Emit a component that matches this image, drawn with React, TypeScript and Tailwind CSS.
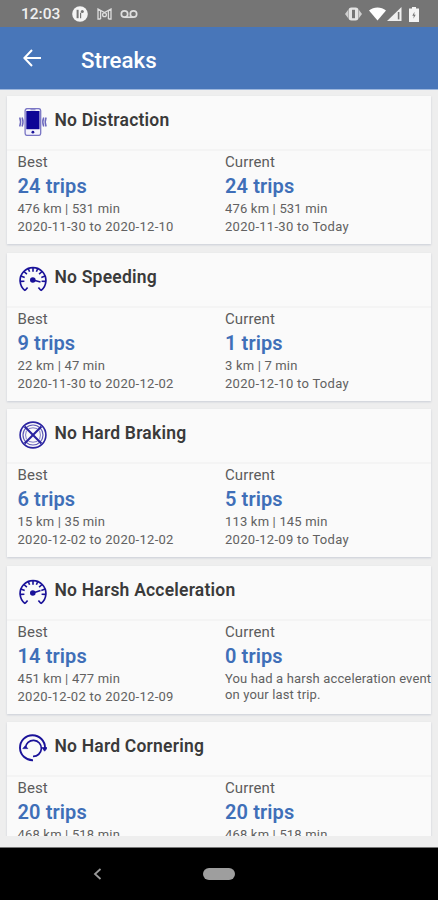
import React from 'react';

interface StreakStat {
  label: string;
  trips: number;
  distance?: string;
  dates?: string;
  note?: string;
}

interface Streak {
  title: string;
  icon: React.ReactNode;
  best: StreakStat;
  current: StreakStat;
}

const NAVY = '#1a1299';

const PhoneIcon = () => (
  <svg className="size-7 shrink-0" viewBox="0 0 28 28" fill="none">
    <rect x="6.1" y="0.6" width="15.6" height="26.8" rx="2.2" fill="#f3f2fb" stroke="#7975c4" strokeWidth="1.3" />
    <rect x="7.3" y="3" width="13.2" height="18.2" fill="#0d0596" />
    <path d="M11.5 1.8h5" stroke="#6c68bd" strokeWidth="0.8" />
    <circle cx="13.9" cy="24.2" r="1.4" fill={NAVY} />
    <path d="M3.1 9.5c1.2 3 1.2 6 0 9M24.7 9.5c-1.2 3-1.2 6 0 9" stroke="#6b67bd" strokeWidth="1.5" />
    <path d="M0.7 9.5c1.2 3 1.2 6 0 9M27.1 9.5c-1.2 3-1.2 6 0 9" stroke="#6b67bd" strokeWidth="1.5" />
  </svg>
);

const GaugeIcon = ({ needle }: { needle: string }) => (
  <svg className="size-7 shrink-0" viewBox="0 0 28 28" fill="none" stroke={NAVY}>
    <path d="M6 25.6A12.9 12.9 0 1 1 22 25.6" strokeWidth="1.7" />
    <path
      d="M14 2v4.8M9 3l1.6 3.7M19 3l-1.6 3.7M4.9 6.5l3 2.7M23.1 6.5l-3 2.7M1.9 11l3.8 1.4M26.1 11l-3.8 1.4M1 16.4l4.4-.2M27 16.4l-4.4-.2M6 25.6l2.6-3.2M22 25.6l-2.6-3.2"
      strokeWidth="1.6"
    />
    <circle cx="13.8" cy="15" r="2.8" fill={NAVY} stroke="none" />
    <path d={needle} strokeWidth="1.6" />
  </svg>
);

const BrakeIcon = () => (
  <svg className="size-7 shrink-0" viewBox="0 0 28 28" fill="none" stroke="#2a23a0">
    <circle cx="14" cy="14" r="12.9" strokeWidth="1.6" />
    <circle cx="14" cy="14" r="10" strokeWidth="1.2" strokeOpacity=".75" />
    <path d="M5.6 5.6l16.8 16.8M22.4 5.6L5.6 22.4" strokeWidth="2.1" />
    <path d="M9.6 7.6q4.4-1.6 8.8 0M9.6 20.4q4.4 1.6 8.8 0M7.4 9.6q-1.6 4.4 0 8.8M20.6 9.6q1.6 4.4 0 8.8" strokeWidth="1" strokeOpacity=".6" />
  </svg>
);

const CornerIcon = () => (
  <svg className="size-7 shrink-0" viewBox="0 0 28 28" fill="none" stroke={NAVY}>
    <path d="M14 26.2A12.5 12.5 0 1 1 26 14" strokeWidth="1.9" />
    <path d="M6.4 13.8A8 8 0 1 1 14 22.3" strokeWidth="1.7" />
    <path d="M23 13.6h5.6L25.6 17.2zM3.8 14.6h5L6.3 11.8z" fill={NAVY} strokeWidth=".7" />
  </svg>
);

const STREAKS: Streak[] = [
  {
    title: 'No Distraction',
    icon: <PhoneIcon />,
    best: { label: 'Best', trips: 24, distance: '476 km | 531 min', dates: '2020-11-30 to 2020-12-10' },
    current: { label: 'Current', trips: 24, distance: '476 km | 531 min', dates: '2020-11-30 to Today' },
  },
  {
    title: 'No Speeding',
    icon: <GaugeIcon needle="M14 15l7.5 2" />,
    best: { label: 'Best', trips: 9, distance: '22 km | 47 min', dates: '2020-11-30 to 2020-12-02' },
    current: { label: 'Current', trips: 1, distance: '3 km | 7 min', dates: '2020-12-10 to Today' },
  },
  {
    title: 'No Hard Braking',
    icon: <BrakeIcon />,
    best: { label: 'Best', trips: 6, distance: '15 km | 35 min', dates: '2020-12-02 to 2020-12-02' },
    current: { label: 'Current', trips: 5, distance: '113 km | 145 min', dates: '2020-12-09 to Today' },
  },
  {
    title: 'No Harsh Acceleration',
    icon: <GaugeIcon needle="M14 15l7.5-2.4" />,
    best: { label: 'Best', trips: 14, distance: '451 km | 477 min', dates: '2020-12-02 to 2020-12-09' },
    current: { label: 'Current', trips: 0, note: 'You had a harsh acceleration event\non your last trip.' },
  },
  {
    title: 'No Hard Cornering',
    icon: <CornerIcon />,
    best: { label: 'Best', trips: 20, distance: '468 km | 518 min' },
    current: { label: 'Current', trips: 20, distance: '468 km | 518 min' },
  },
];

const Stat = ({ stat }: { stat: StreakStat }) => (
  <div className="flex flex-col text-[13px] leading-[18px] whitespace-nowrap text-[#616161]">
    <span className="text-[15px] leading-5 tracking-[0.1px] text-[#5c5c5c]">{stat.label}</span>
    <span className="mt-px text-[20px] leading-[27px] font-semibold tracking-[0.1px] text-[#3f6fb8]">{stat.trips} trips</span>
    {stat.distance && <span className="tracking-[0.18px]">{stat.distance}</span>}
    {stat.dates && <span className="tracking-[0.29px]">{stat.dates}</span>}
    {stat.note && <p className="pt-px leading-4 tracking-[0.14px] whitespace-pre">{stat.note}</p>}
  </div>
);

const StreakCard = ({ streak }: { streak: Streak }) => (
  <section className="h-[148px] shrink-0 bg-[#fafafa] shadow-[0_1px_2px_#c9cdd6]">
    <header className="flex h-[55px] items-start gap-[7.5px] border-b-2 border-[#f4f4f4] pt-3 pl-3">
      {streak.icon}
      <h2 className="text-[17.5px] leading-[24px] font-semibold tracking-[0.2px] text-[#3a3a3a]">{streak.title}</h2>
    </header>
    <div className="grid grid-cols-[207.5px_1fr] pt-[1px] pl-[10.5px]">
      <Stat stat={streak.best} />
      <Stat stat={streak.current} />
    </div>
  </section>
);

const StatusBar = () => (
  <div className="flex h-[27px] shrink-0 items-center bg-[#757575] pt-px pr-[19px] pl-[21px] text-[#f0f0f0]">
    <span className="w-[51px] pt-0.5 text-[15.5px] leading-none font-medium">12:03</span>
    <svg className="size-4" viewBox="0 0 16 16">
      <circle cx="8" cy="8" r="7.8" fill="#f4f4f4" />
      <path d="M5.6 3.8v8.4" stroke="#757575" strokeWidth="2" fill="none" />
      <path d="M8.6 12.2V6.8" stroke="#757575" strokeWidth="1.2" fill="none" />
      <circle cx="10.3" cy="5.4" r="1.5" fill="#757575" />
    </svg>
    <svg className="ml-[9px] h-3 w-[15px]" viewBox="0 0 15 12" fill="none" stroke="#dedede" strokeWidth="1.3">
      <path d="M3.6 11H1V1l6.5 3.6L14 1v10h-2.6M3.6 3v8M11.4 3v8" />
      <circle cx="7.5" cy="6.8" r="1.9" />
    </svg>
    <svg className="ml-2 h-2.5 w-[18px]" viewBox="0 0 18 10" fill="none" stroke="#dedede" strokeWidth="1.7">
      <circle cx="4.5" cy="5" r="3.2" />
      <circle cx="13.5" cy="5" r="3.2" />
      <path d="M4.5 8.2h9" />
    </svg>
    <div className="ml-auto flex items-center">
      <svg className="h-3.5 w-[17px]" viewBox="0 0 17 14">
        <path d="M0 7l3-4v8zM17 7l-3-4v8z" fill="#cfcfcf" />
        <rect x="3.5" y="0.5" width="10" height="13" rx="3" fill="#e4e4e4" />
        <rect x="7" y="2.8" width="3" height="8.4" fill="#757575" />
      </svg>
      <svg className="ml-[7px] h-3.5 w-[17px]" viewBox="0 0 18 14">
        <path d="M0 3.4C5 -.9 13 -.9 18 3.4L9 14z" fill="#fff" />
      </svg>
      <svg className="ml-px h-3.5 w-[15px]" viewBox="0 0 15 14">
        <path d="M0 14L14.5 0v14z" fill="#efefef" />
        <path d="M11.6 5v7.4" stroke="#757575" strokeWidth="1.6" />
      </svg>
      <svg className="ml-[7px] h-[15px] w-2.5" viewBox="0 0 10 15">
        <path d="M3 0h4v1.6h3V15H0V1.6h3z" fill="#f4f4f4" />
        <path d="M5.5 4.8L3.3 8.7h1.5l-.4 3 2.3-4H5.2z" fill="#757575" />
      </svg>
    </div>
  </div>
);

const App: React.FC = () => {
  return (
    <div className="flex h-[900px] w-[438px] flex-col overflow-hidden bg-[#eee] font-['Roboto',sans-serif]">
      <StatusBar />
      <header className="flex h-[63px] shrink-0 items-center border-b border-[#9db7dd] bg-[#4876b9] pl-[23px] text-white">
        <svg className="h-[18px] w-[18px]" viewBox="0 0 18 18" fill="none" stroke="#fff" strokeWidth="2">
          <path d="M18 9H1.6M9 1L1.4 9 9 17" />
        </svg>
        <h1 className="ml-10 pt-1 text-[22.3px] leading-none font-medium">Streaks</h1>
      </header>

      {/* Scrolling list, clipped above the bottom inset */}
      <main className="flex h-[746px] shrink-0 flex-col gap-[8.5px] overflow-hidden px-[7px] pt-[6px]">
        {STREAKS.map(streak => (
          <StreakCard key={streak.title} streak={streak} />
        ))}
      </main>

      <nav className="mt-[11px] flex flex-1 items-center border-t border-[#777] bg-black pl-[93px]">
        <svg className="h-3 w-[9px]" viewBox="0 0 9 12" fill="none" stroke="#9a9a9a" strokeWidth="1.8">
          <path d="M7.5 1L2 6l5.5 5" />
        </svg>
        <div className="ml-[101px] h-3 w-8 rounded-full bg-[#9e9e9e]" />
      </nav>
    </div>
  );
};

export default App;
